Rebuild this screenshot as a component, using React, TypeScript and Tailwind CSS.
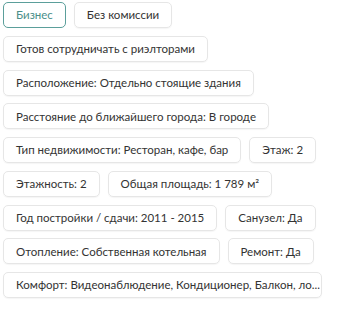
import React from "react";

const rows: { t: string; active?: boolean }[][] = [
  [{ t: "Бизнес", active: true }, { t: "Без комиссии" }],
  [{ t: "Готов сотрудничать с риэлторами" }],
  [{ t: "Расположение: Отдельно стоящие здания" }],
  [{ t: "Расстояние до ближайшего города: В городе" }],
  [{ t: "Тип недвижимости: Ресторан, кафе, бар" }, { t: "Этаж: 2" }],
  [{ t: "Этажность: 2" }, { t: "Общая площадь: 1 789 м²" }],
  [{ t: "Год постройки / сдачи: 2011 - 2015" }, { t: "Санузел: Да" }],
  [{ t: "Отопление: Собственная котельная" }, { t: "Ремонт: Да" }],
  [{ t: "Комфорт: Видеонаблюдение, Кондиционер, Балкон, ло..." }],
];

export default function App() {
  return (
    <div
      className="w-[364px] h-[310px] bg-white pl-[3px] pt-[2px] flex flex-col gap-[7.75px]"
      style={{ fontFamily: "Lato, 'Noto Sans', sans-serif" }}
    >
      {rows.map((row, i) => (
        <div key={i} className="flex gap-2">
          {row.map((c, j) => (
            <div
              key={j}
              className={
                "h-[26px] flex items-center px-3 rounded-[5px] border text-[11.5px] whitespace-nowrap " +
                (c.active
                  ? "border-[#5b9f9b] text-[#4b8f8a]"
                  : "border-[#e6e6e6] text-[#333333] shadow-[0_1px_1px_rgba(0,0,0,0.04)]") +
                (i === 8 ? " w-[319px]" : "")
              }
            >
              {c.t}
            </div>
          ))}
        </div>
      ))}
    </div>
  );
}
